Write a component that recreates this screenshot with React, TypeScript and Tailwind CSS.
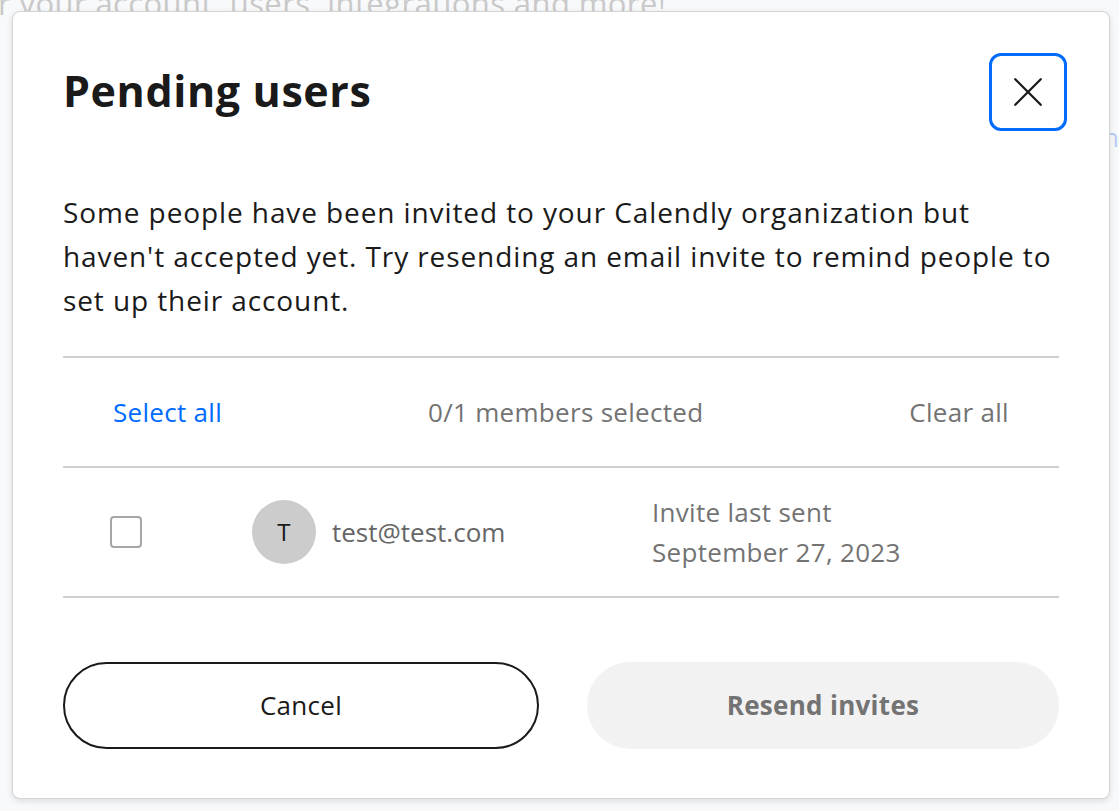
import { useState } from "react";

const font = { fontFamily: "'Open Sans', 'Noto Sans', sans-serif" };

export default function App() {
  const [checked, setChecked] = useState(false);

  return (
    <div className="relative h-[811px] w-[1119px] overflow-hidden bg-[#f8f9fb]" style={font}>
      {/* page behind the dialog */}
      <div className="-mt-[16px] -ml-[2px] whitespace-nowrap text-[31px] leading-[38px] tracking-[0.4px] text-[#c9c9c9]">r your account, users, integrations and more!</div>
      <div className="mt-[96px] flex justify-end">
        <span className="text-[26px] text-[#b8ccf5]">n</span>
      </div>

      {/* dialog */}
      <div className="absolute left-[12px] top-[11px] flex h-[788px] w-[1098px] flex-col rounded-[8px] border border-[#d4d4d4] bg-white px-[50px] pb-[49px] shadow-[0_2px_6px_rgba(0,0,0,0.12)]">
        <div className="flex items-start justify-between pt-[41px]">
          <h1 className="pt-[13px] text-[43px] font-bold leading-[50px] tracking-[0.6px] text-[#1a1a1a]">Pending users</h1>
          <button className="mr-[-8px] flex h-[78px] w-[78px] items-center justify-center rounded-[12px] border-[3px] border-[#006bff]">
            <svg width="34" height="34" viewBox="0 0 24 24" fill="none" stroke="#1a1a1a" strokeWidth="1.6" strokeLinecap="round">
              <path d="M3 3l18 18M21 3L3 21" />
            </svg>
          </button>
        </div>

        <p className="mt-[59px] text-[28px] leading-[44px] tracking-[0.9px] text-[#1a1a1a]">
          Some people have been invited to your Calendly organization but haven't accepted yet. Try resending an email invite to remind people to set up their account.
        </p>

        <div className="mt-[34px] border-t-2 border-[#d0d0d0]" />
        <div className="flex h-[108px] items-center justify-between px-[50px] text-[26px] tracking-[0.3px]">
          <button className="text-[#006bff]" onClick={() => setChecked(true)}>Select all</button>
          <span className="text-[#737373]">{checked ? "1" : "0"}/1 members selected</span>
          <button className="text-[#737373]" onClick={() => setChecked(false)}>Clear all</button>
        </div>
        <div className="border-t-2 border-[#d0d0d0]" />

        <div className="flex h-[128px] items-center text-[26px] tracking-[0.3px]">
          <button
            onClick={() => setChecked(!checked)}
            className={`ml-[47px] h-[32px] w-[32px] rounded-[4px] border-2 ${checked ? "border-[#006bff] bg-[#006bff]" : "border-[#a6a6a6] bg-white"}`}
          />
          <div className="ml-[110px] flex h-[64px] w-[64px] items-center justify-center rounded-full bg-[#cccccc] text-[24px] text-[#1a1a1a]">T</div>
          <span className="ml-[16px] w-[320px] tracking-[0px] text-[#666666]">test@test.com</span>
          <div className="flex flex-col leading-[40px] text-[#737373]">
            <span>Invite last sent</span>
            <span>September 27, 2023</span>
          </div>
        </div>
        <div className="border-t-2 border-[#d0d0d0]" />

        <div className="mt-auto flex gap-[48px]">
          <button className="h-[87px] flex-1 rounded-full border-2 border-[#1a1a1a] text-[26px] tracking-[0.3px] text-[#1a1a1a]">Cancel</button>
          <button className="h-[87px] flex-1 rounded-full bg-[#f2f2f2] text-[26px] font-bold tracking-[0.3px] text-[#737373]">Resend invites</button>
        </div>
      </div>
    </div>
  );
}
